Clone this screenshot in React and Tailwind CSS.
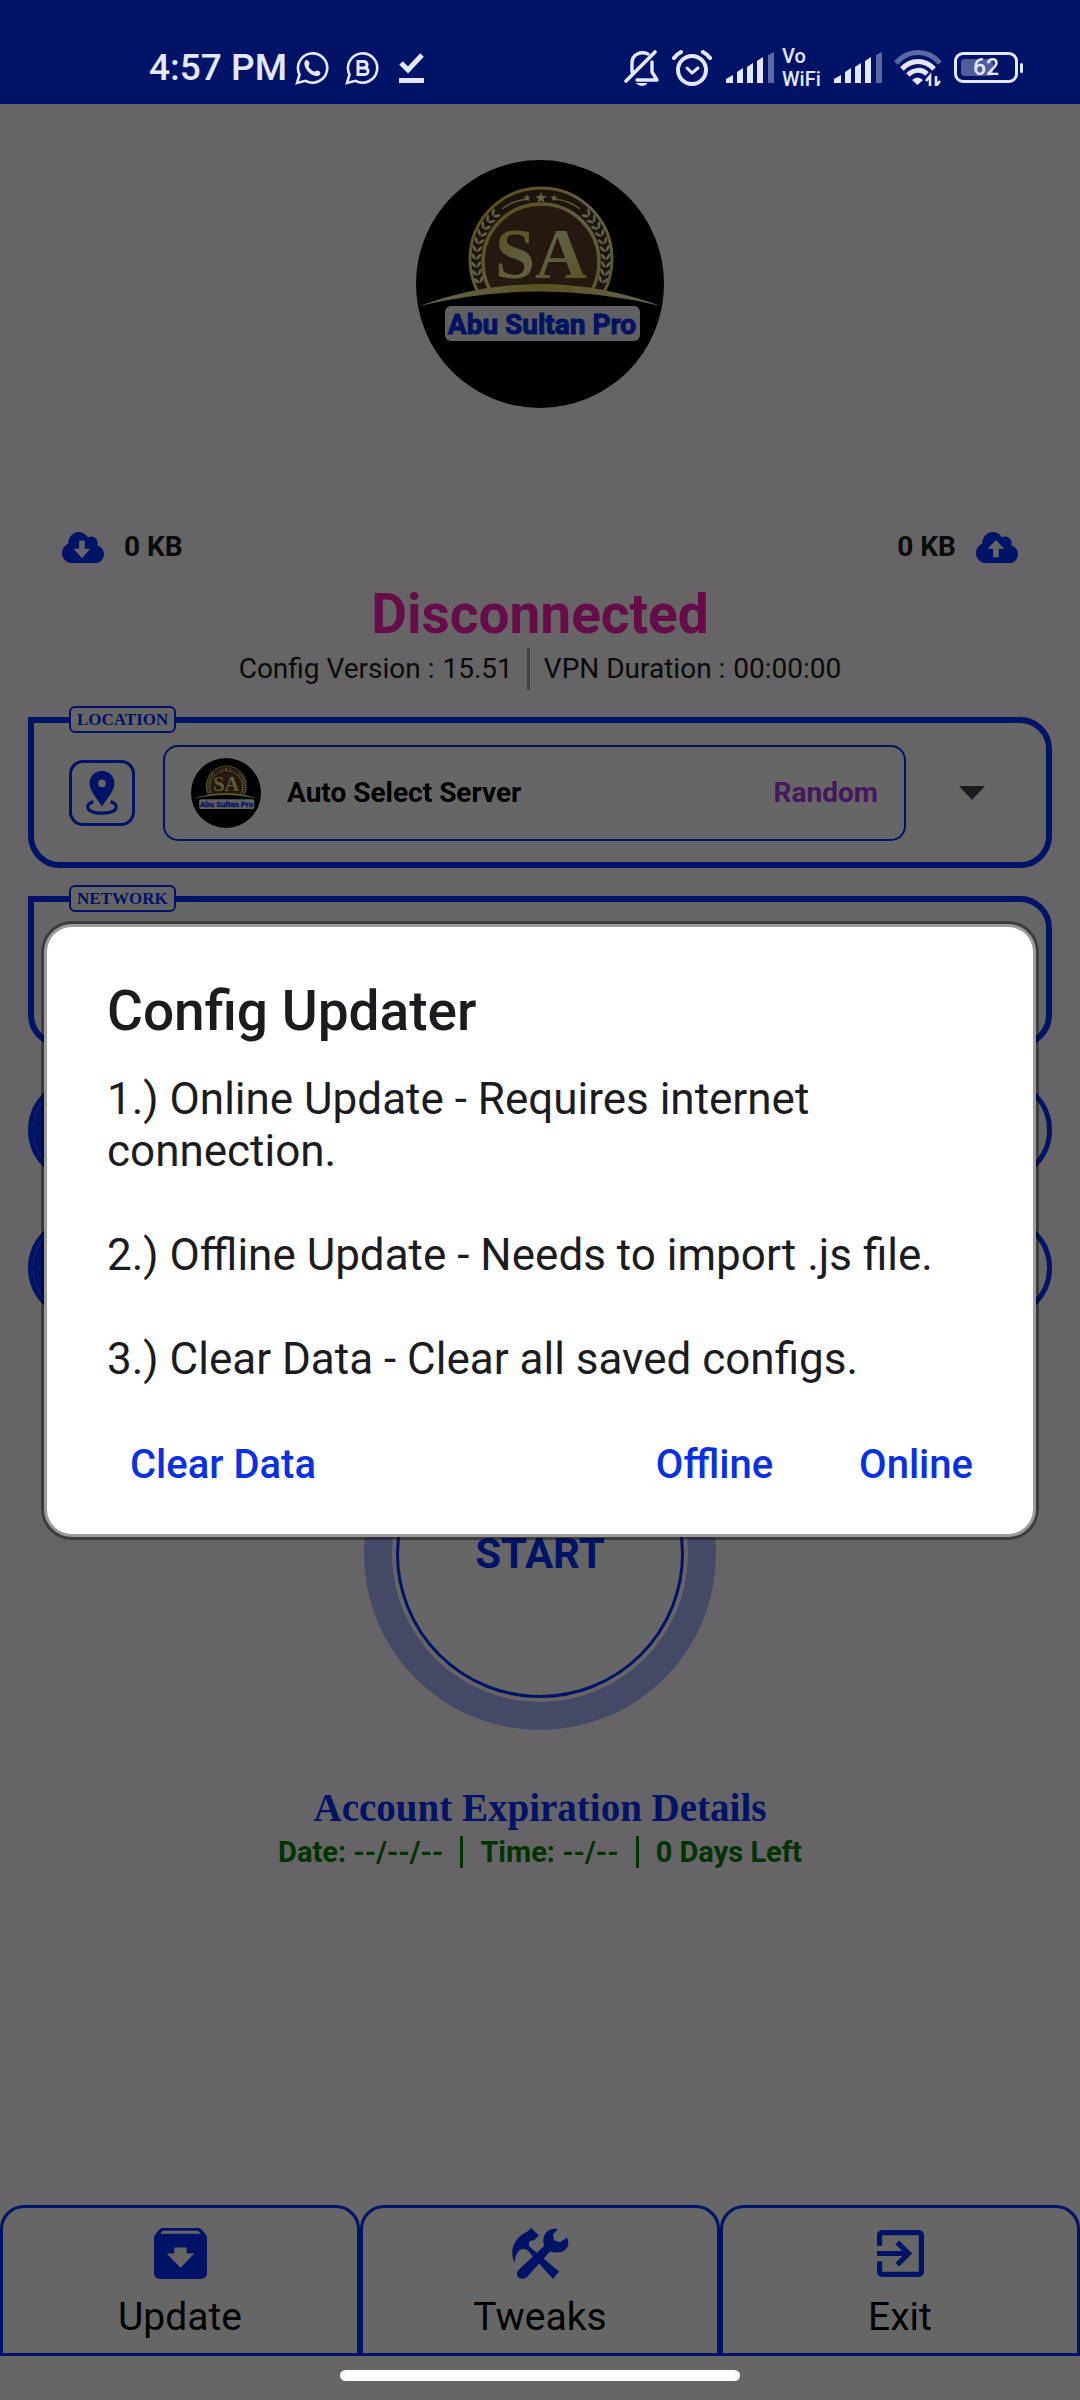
import React, { useState } from "react";

const ARCHIVE_PATH =
  "M20.54 5.23l-1.39-1.68C18.88 3.21 18.47 3 18 3H6c-.47 0-.88.21-1.16.55L3.46 5.23C3.17 5.57 3 6.02 3 6.5V19c0 1.1.9 2 2 2h14c1.1 0 2-.9 2-2V6.5c0-.48-.17-.93-.46-1.27zM12 17L7.3 12H9.9V9.900h4.2V12h2.6L12 17zM5.12 5l.81-1h12l.94 1H5.12z";
const EXIT_PATH =
  "M10.09 15.59L11.5 17l5-5-5-5-1.41 1.41L12.67 11H3v2h9.67l-2.58 2.59zM19 3H5c-1.11 0-2 .9-2 2v4h2V5h14v14H5v-4H3v4c0 1.1.89 2 2 2h14c1.1 0 2-.9 2-2V5c0-1.1-.9-2-2-2z";
const CLOUD_PATH =
  "M537.6 226.6c4.1-10.7 6.4-22.4 6.4-34.6 0-53-43-96-96-96-19.7 0-38.1 6-53.3 16.2C367 64.2 315.3 32 256 32c-88.4 0-160 71.6-160 160 0 2.7.1 5.4.2 8.1C40.2 219.8 0 273.2 0 336c0 79.5 64.5 144 144 144h368c70.7 0 128-57.3 128-128 0-61.9-44-113.6-102.4-125.4z";
const BUBBLE_PATH = "M2 32 L4.5 23.5 A14.6 14.6 0 1 1 10.5 29.8 Z";
const STAR_PATH = "M0 -6 L1.5 -1.9 L5.8 -1.8 L2.4 0.8 L3.6 5 L0 2.5 L-3.6 5 L-2.4 0.8 L-5.8 -1.8 L-1.5 -1.9 Z";

export default function App() {
  const [dialogOpen, setDialogOpen] = useState(true);
  const close = () => setDialogOpen(false);

  return (
    <div className="relative flex min-h-screen flex-col bg-[#fffaff] font-['Roboto',sans-serif] text-[#1c1b1f]">
      <div className="h-[104px] bg-[#0030ff]" />

      <main className="flex flex-1 flex-col px-7">
        <Logo className="mx-auto mt-14 size-[248px]" />

        {/* Traffic counters */}
        <div className="mt-[121px] flex items-center justify-between px-[34px] text-[28px] leading-9 font-bold">
          <div className="flex items-center gap-5">
            <CloudIcon direction="down" />
            <span>0 KB</span>
          </div>
          <div className="flex items-center gap-5">
            <span>0 KB</span>
            <CloudIcon direction="up" />
          </div>
        </div>

        <h1 className="mt-[17px] text-center text-[55px] leading-[64px] font-bold text-[#ff1eb4]">Disconnected</h1>

        <div className="mt-0.5 flex items-stretch justify-center gap-3.5 text-[28px] leading-[42px]">
          <p className="flex gap-2">
            <span>Config Version :</span>
            <span>15.51</span>
          </p>
          <span className="w-[3px] bg-[#a8a4a8]" />
          <p className="flex gap-2">
            <span>VPN Duration :</span>
            <span>00:00:00</span>
          </p>
        </div>

        <Panel label="LOCATION" className="mt-[27px]">
          <div className="flex items-center pr-[61px] pl-[35px]">
            <div className="flex size-[66px] items-center justify-center rounded-[14px] border-[3px] border-[#0030ff]">
              <PinIcon />
            </div>
            <button
              type="button"
              className="ml-7 flex h-24 flex-1 items-center rounded-[15px] border-2 border-[#0030ff] px-[26px] text-[28px] font-bold text-black"
            >
              <Logo className="size-[70px]" />
              <span className="ml-[26px]">Auto Select Server</span>
              <span className="ml-auto text-[#a83ce6]">Random</span>
            </button>
            <svg className="ml-[53px] h-[14px] w-[26px] fill-[#49454f]" viewBox="0 0 26 14">
              <path d="M0 0H26L13 14Z" />
            </svg>
          </div>
        </Panel>

        <Panel label="NETWORK" className="mt-7" />

        <div className="mt-[31px] h-[104px] overflow-hidden rounded-full border-[5px] border-[#0030ff] bg-white">
          <div className="h-full w-28 bg-[#0030ff]" />
        </div>
        <div className="mt-[34px] h-[104px] overflow-hidden rounded-full border-[5px] border-[#0030ff] bg-white">
          <div className="h-full w-28 bg-[#0030ff]" />
        </div>

        <div className="mx-auto mt-[58px] size-[352px] rounded-full bg-[#aab6ff] p-7">
          <div className="size-full rounded-full bg-[#fffaff] p-1">
            <button
              type="button"
              className="size-full rounded-full border-[3px] border-[#0030ff] bg-white text-[42px] leading-none font-bold text-[#0030ff]"
            >
              START
            </button>
          </div>
        </div>

        <h2 className="mt-[55px] text-center font-['Liberation_Serif',serif] text-[39px] leading-[46px] font-bold text-[#0030ff]">
          Account Expiration Details
        </h2>
        <div className="mt-[5px] flex justify-center gap-[17px] text-[29px] leading-8 font-bold text-[#008000]">
          <span>Date: --/--/--</span>
          <span className="w-[3px] bg-[#008000]" />
          <span>Time: --/--</span>
          <span className="w-[3px] bg-[#008000]" />
          <span>0 Days Left</span>
        </div>
      </main>

      <nav className="grid grid-cols-3 bg-white">
        <NavButton label="Update">
          <svg className="h-[51px] w-[53px]" viewBox="3 3 18 18" preserveAspectRatio="none" fill="currentColor">
            <path d={ARCHIVE_PATH} />
          </svg>
        </NavButton>
        <NavButton label="Tweaks">
          <svg className="h-[51px] w-[57px]" viewBox="0 0 57 54" preserveAspectRatio="none" fill="currentColor">
            <path d="M19 0L27 8L22 13C16 13 15 18 20 22L47 46L41 54L19 28C16 21 8 20 5 27C3 30 3 33 3 37C-2 29 -1 13 13 5Q16 4 19 0Z" />
            <path d="M46 1L41 7L42 13L48 15L55 10C59 18 54 26 45 26Q41 26 38 25L15 52C10 57 2 51 6 45L32 19C29 7 36-1 46 1Z" />
          </svg>
        </NavButton>
        <NavButton label="Exit">
          <svg className="my-0.5 size-[47px]" viewBox="3 3 18 18" fill="currentColor">
            <path d={EXIT_PATH} />
          </svg>
        </NavButton>
      </nav>
      <div className="h-11 bg-white" />

      {/* Dimmed layer and dialog */}
      {dialogOpen && (
        <div className="absolute inset-0 flex items-center bg-black/60 px-11 pt-[104px] pb-11">
          <div
            role="dialog"
            aria-labelledby="updater-title"
            className="w-full rounded-[28px] border-[3px] border-[#9b9b9b] bg-white px-[60px] pt-[50px] pb-[25px] ring-[3px] ring-black/40"
          >
            <h2 id="updater-title" className="text-[55px] leading-[68px] font-medium">
              Config Updater
            </h2>
            <div className="mt-7 space-y-[52px] text-[44px] leading-[52px]">
              <p>1.) Online Update - Requires internet connection.</p>
              <p>2.) Offline Update - Needs to import .js file.</p>
              <p>3.) Clear Data - Clear all saved configs.</p>
            </div>
            <div className="mt-9 flex h-[88px] items-center pl-[23px] text-[40px] font-medium text-[#0a30e6]">
              <button type="button" onClick={close}>Clear Data</button>
              <button type="button" onClick={close} className="ml-auto">Offline</button>
              <button type="button" onClick={close} className="ml-[86px]">Online</button>
            </div>
          </div>
        </div>
      )}

      <StatusBar />
      <div className="absolute inset-x-0 bottom-[19px] mx-auto h-[11px] w-[400px] rounded-full bg-white" />
    </div>
  );
}

const Panel = ({ label, className, children }) => (
  <section
    className={`relative flex h-[151px] flex-col justify-center rounded-[32px] rounded-tl-none border-[6px] border-[#0030ff] bg-white ${className}`}
  >
    <h3 className="absolute -top-[17px] left-[35px] rounded-md border-2 border-[#0030ff] bg-white px-1.5 font-['Liberation_Serif',serif] text-[17px] leading-[23px] font-bold text-[#0030ff]">
      {label}
    </h3>
    {children}
  </section>
);

const NavButton = ({ label, children }) => (
  <button
    type="button"
    className="flex h-[151px] flex-col items-center rounded-t-3xl border-[3px] border-[#0030ff] pt-5 text-[#0030ff]"
  >
    {children}
    <span className="mt-3.5 text-[39px] leading-[48px] text-black">{label}</span>
  </button>
);

const CloudIcon = ({ direction }) => (
  <svg className="h-[31px] w-[42px]" viewBox="0 32 640 448" preserveAspectRatio="none">
    <path d={CLOUD_PATH} fill="#0030ff" />
    <path
      d={direction === "down" ? "M261 154H347V275H430L304 412L176 275H261Z" : "M261 396V275H176L304 148L430 275H347V396Z"}
      fill="#fffaff"
    />
  </svg>
);

const PinIcon = () => (
  <svg className="h-11 w-[34px]" viewBox="0 0 34 46">
    <path
      fill="#0030ff"
      fillRule="evenodd"
      d="M17 0C9.500 0 4 5.500 4 13C4 21 12 29 17 37C22 29 30 21 30 13C30 5.500 24.500 0 17 0ZM17 9A4 4 0 1 1 17 17A4 4 0 1 1 17 9Z"
    />
    <path d="M8 32C-2 35 0 44 17 44S36 35 26 32" fill="none" stroke="#0030ff" strokeWidth="3.400" />
  </svg>
);

// Leaf pairs that follow the badge's band, from the bottom up
const LEAF_ANGLES = [-18, -11, -4, 3, 10, 17, 24, 31, 38, 45];

const Logo = ({ className }) => (
  <svg className={className} viewBox="0 0 248 248">
    <defs>
      <linearGradient id="gold" x1="0" y1="0" x2="1" y2="1">
        <stop offset="0" stopColor="#d8c040" />
        <stop offset="0.500" stopColor="#f4efa8" />
        <stop offset="1" stopColor="#d8c848" />
      </linearGradient>
      <linearGradient id="swoosh" x1="0" y1="0" x2="1" y2="0">
        <stop offset="0" stopColor="#fffbe0" />
        <stop offset="0.500" stopColor="#d8cf48" />
        <stop offset="1" stopColor="#fffbe0" />
      </linearGradient>
    </defs>
    <circle cx="124" cy="124" r="124" fill="#000" />
    <circle cx="125" cy="99" r="71" fill="#4a3220" stroke="url(#gold)" strokeWidth="3" />
    <circle cx="125" cy="102" r="58" fill="#5c3c24" stroke="url(#gold)" strokeWidth="3.500" />
    {LEAF_ANGLES.map((angle) =>
      [-1, 1].map((side) => (
        <g
          key={`${side}${angle}`}
          fill="#f4ecc0"
          transform={`translate(125 100) scale(${side} 1) rotate(${-angle}) translate(65 0)`}
        >
          <ellipse cx="-2.600" cy="0" rx="1.400" ry="3.600" transform="rotate(-35 -2.600 0)" />
          <ellipse cx="2.600" cy="0" rx="1.400" ry="3.600" transform="rotate(35 2.600 0)" />
        </g>
      ))
    )}
    <path d="M86 49Q96 41 111 39M164 49Q154 41 139 39" fill="none" stroke="#e8dc80" strokeWidth="1.500" />
    <path d={STAR_PATH} transform="translate(125 38)" fill="#f8f0c0" />
    <path d={STAR_PATH} transform="translate(111 38) scale(0.650)" fill="#f8f0c0" />
    <path d={STAR_PATH} transform="translate(138 38) scale(0.650)" fill="#f8f0c0" />
    <text
      x="125"
      y="118"
      textAnchor="middle"
      fontFamily="Liberation Serif, serif"
      fontSize="72"
      fontWeight="700"
      fill="url(#gold)"
    >
      SA
    </text>
    <path d="M30 138Q124 120 218 138V174H30Z" fill="#000" />
    <path d="M3 146Q124 102 245 146Q124 117 3 146Z" fill="url(#swoosh)" />
    <rect x="29" y="146" width="195" height="35" rx="6" fill="#f0f0f4" />
    <text
      x="126"
      y="174"
      textAnchor="middle"
      fontFamily="Roboto, sans-serif"
      fontSize="28"
      fontWeight="700"
      fill="#0c30f0"
      stroke="#0c30f0"
    >
      Abu Sultan Pro
    </text>
  </svg>
);

const SignalIcon = () => (
  <svg className="h-8 w-12" viewBox="0 0 48 32" fill="currentColor">
    <path d="M0 31V27L7 23V31ZM11 31V20L17 16V31ZM21 31V15L27 11V31ZM31 31V9L37 5V31Z" />
    <path d="M42 31V3L48 0V31Z" opacity="0.400" />
  </svg>
);

const StatusBar = () => (
  <header className="absolute inset-x-0 top-0 flex h-[104px] items-center pt-[31px] pr-[57px] pl-[149px] text-[#e4e8ff]">
    <span className="text-[37px] leading-none font-medium">4:57 PM</span>
    <svg className="ml-2 size-[34px]" viewBox="0 0 34 34">
      <path d={BUBBLE_PATH} fill="none" stroke="currentColor" strokeWidth="2.600" />
      <path d="M10 10C7 15 15 26 23 25C26 24 26 21 24 20C20 18 21 22 18 20C14 17 13 16 14 14C16 12 12 7 10 10Z" fill="currentColor" />
    </svg>
    <svg className="ml-4 size-[34px]" viewBox="0 0 34 34" fill="none" stroke="currentColor">
      <path d={BUBBLE_PATH} strokeWidth="2.600" />
      <path d="M13 10.500H18.500Q22 10.500 22 13.700T18.500 17H13H19.500Q23 17 23 20.300T19.500 23.500H13Z" strokeWidth="3" />
    </svg>
    <svg className="ml-5 h-[30px] w-[26px]" viewBox="0 0 26 30">
      <path d="M2 10L9 17L23 2" fill="none" stroke="currentColor" strokeWidth="5" />
      <path d="M0 25H25V30H0Z" fill="currentColor" />
    </svg>

    <div className="ml-auto flex items-center">
      <svg className="h-[38px] w-9" viewBox="0 0 36 38" fill="none" stroke="currentColor" strokeLinecap="round" strokeLinejoin="round">
        <path d="M2 32L31 3" strokeWidth="3.600" />
        <path d="M8 23V14C8 5 17 2 24 5M28 13V23L33 31H13" strokeWidth="3.400" />
        <path d="M13 34.500H23Q18 38.500 13 34.500Z" fill="currentColor" strokeWidth="1" />
      </svg>
      <svg className="ml-3 h-9 w-10" viewBox="0 0 40 36" fill="none" stroke="currentColor" strokeLinecap="round" strokeLinejoin="round">
        <circle cx="20" cy="20" r="14" strokeWidth="4" />
        <path d="M15 18L20 23L26 18" strokeWidth="3" />
        <path d="M2 8Q5 4 9 2M38 8Q35 4 31 2" strokeWidth="4" />
      </svg>
      <div className="ml-3.5">
        <SignalIcon />
      </div>
      <div className="ml-2 flex w-[44px] flex-col text-[20px] leading-[23px] font-medium">
        <span>Vo</span>
        <span>WiFi</span>
      </div>
      <div className="ml-2">
        <SignalIcon />
      </div>
      <svg className="ml-3 h-9 w-[48px]" viewBox="0 0 48 36" fill="none" stroke="currentColor" strokeWidth="5">
        <path d="M2 13C14-1 34-1 46 13" opacity="0.400" />
        <path d="M8 19C17 9 31 9 40 19" />
        <path d="M14 25C20 19 28 19 33 24" />
        <path d="M18 30Q23.500 25 29 30L23.500 35Z" fill="currentColor" stroke="none" />
        <path d="M36 36V26L32 31M42 26V36L46 31" strokeWidth="2.600" />
      </svg>
      <div className="ml-3 flex items-center gap-0.5">
        <div className="relative flex h-[31px] w-[64px] items-center justify-center rounded-[9px] border-[3px] border-current">
          <span className="absolute inset-y-1 left-1 w-8 rounded-sm bg-current/35" />
          <span className="relative text-[23px] leading-none font-medium">62</span>
        </div>
        <span className="h-2.5 w-[3px] rounded-full bg-current" />
      </div>
    </div>
  </header>
);
